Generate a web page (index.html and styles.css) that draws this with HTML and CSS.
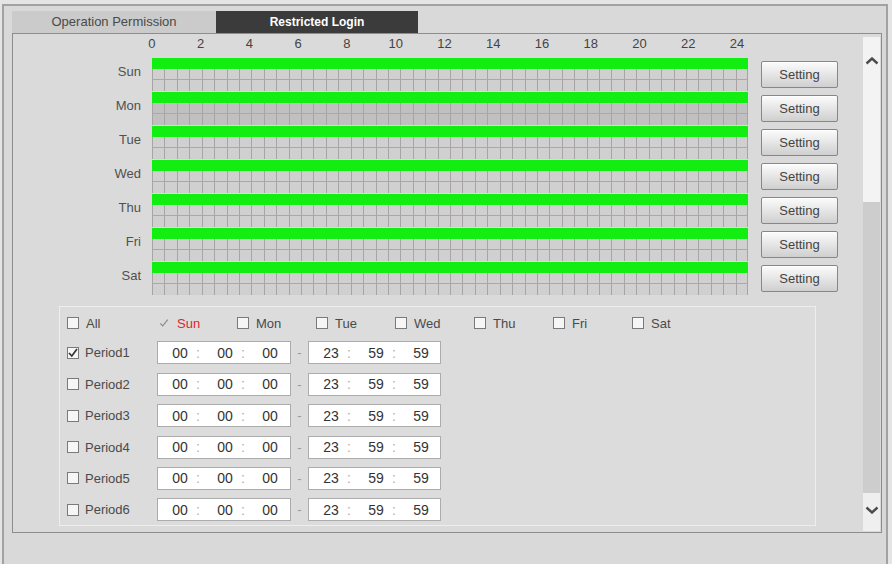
FILE: index.html
```html
<!DOCTYPE html>
<html lang="en">
<head>
  <meta charset="UTF-8">
  <title>Restricted Login</title>
  <meta name="viewport" content="width=device-width, initial-scale=1">
  <link rel="stylesheet" href="styles.css">
</head>
<body>

  <div class="frame">
    <div class="tabs">
      <div class="tab">Operation Permission</div>
      <div class="tab active">Restricted Login</div>
    </div>

    <div class="panel">
      <div class="content">

        <div class="hours">
          <span>0</span><span>2</span><span>4</span><span>6</span><span>8</span><span>10</span><span>12</span>
          <span>14</span><span>16</span><span>18</span><span>20</span><span>22</span><span>24</span>
        </div>

        <div class="day-row">
          <div class="day-name">Sun</div>
          <div class="timeline"><div class="bar"></div><div class="grid"></div></div>
          <button class="setting">Setting</button>
        </div>
        <div class="day-row">
          <div class="day-name">Mon</div>
          <div class="timeline"><div class="bar"></div><div class="grid dark"></div></div>
          <button class="setting">Setting</button>
        </div>
        <div class="day-row">
          <div class="day-name">Tue</div>
          <div class="timeline"><div class="bar"></div><div class="grid"></div></div>
          <button class="setting">Setting</button>
        </div>
        <div class="day-row">
          <div class="day-name">Wed</div>
          <div class="timeline"><div class="bar"></div><div class="grid"></div></div>
          <button class="setting">Setting</button>
        </div>
        <div class="day-row">
          <div class="day-name">Thu</div>
          <div class="timeline"><div class="bar"></div><div class="grid"></div></div>
          <button class="setting">Setting</button>
        </div>
        <div class="day-row">
          <div class="day-name">Fri</div>
          <div class="timeline"><div class="bar"></div><div class="grid"></div></div>
          <button class="setting">Setting</button>
        </div>
        <div class="day-row">
          <div class="day-name">Sat</div>
          <div class="timeline"><div class="bar"></div><div class="grid"></div></div>
          <button class="setting">Setting</button>
        </div>

        <div class="period-box">
          <div class="week-row">
            <label class="check-item first"><span class="checkbox"></span>All</label>
            <label class="check-item current">
              <span class="checkbox plain"><svg width="12" height="12" viewBox="0 0 12 12"><polyline points="1.5,6.5 4.5,9.5 10.5,2" fill="none" stroke="#8c8c8c" stroke-width="1.5"/></svg></span>Sun
            </label>
            <label class="check-item"><span class="checkbox"></span>Mon</label>
            <label class="check-item"><span class="checkbox"></span>Tue</label>
            <label class="check-item"><span class="checkbox"></span>Wed</label>
            <label class="check-item"><span class="checkbox"></span>Thu</label>
            <label class="check-item"><span class="checkbox"></span>Fri</label>
            <label class="check-item"><span class="checkbox"></span>Sat</label>
          </div>

          <div class="period-row">
            <label class="period-name">
              <span class="checkbox"><svg width="10" height="10" viewBox="0 0 10 10"><polyline points="1,5 3.8,8 9,1" fill="none" stroke="#333" stroke-width="1.7"/></svg></span>Period1
            </label>
            <div class="time-box"><span class="num">00</span><span class="sep">:</span><span class="num">00</span><span class="sep">:</span><span class="num">00</span></div>
            <span class="dash">-</span>
            <div class="time-box"><span class="num">23</span><span class="sep">:</span><span class="num">59</span><span class="sep">:</span><span class="num">59</span></div>
          </div>
          <div class="period-row">
            <label class="period-name"><span class="checkbox"></span>Period2</label>
            <div class="time-box"><span class="num">00</span><span class="sep">:</span><span class="num">00</span><span class="sep">:</span><span class="num">00</span></div>
            <span class="dash">-</span>
            <div class="time-box"><span class="num">23</span><span class="sep">:</span><span class="num">59</span><span class="sep">:</span><span class="num">59</span></div>
          </div>
          <div class="period-row">
            <label class="period-name"><span class="checkbox"></span>Period3</label>
            <div class="time-box"><span class="num">00</span><span class="sep">:</span><span class="num">00</span><span class="sep">:</span><span class="num">00</span></div>
            <span class="dash">-</span>
            <div class="time-box"><span class="num">23</span><span class="sep">:</span><span class="num">59</span><span class="sep">:</span><span class="num">59</span></div>
          </div>
          <div class="period-row">
            <label class="period-name"><span class="checkbox"></span>Period4</label>
            <div class="time-box"><span class="num">00</span><span class="sep">:</span><span class="num">00</span><span class="sep">:</span><span class="num">00</span></div>
            <span class="dash">-</span>
            <div class="time-box"><span class="num">23</span><span class="sep">:</span><span class="num">59</span><span class="sep">:</span><span class="num">59</span></div>
          </div>
          <div class="period-row">
            <label class="period-name"><span class="checkbox"></span>Period5</label>
            <div class="time-box"><span class="num">00</span><span class="sep">:</span><span class="num">00</span><span class="sep">:</span><span class="num">00</span></div>
            <span class="dash">-</span>
            <div class="time-box"><span class="num">23</span><span class="sep">:</span><span class="num">59</span><span class="sep">:</span><span class="num">59</span></div>
          </div>
          <div class="period-row">
            <label class="period-name"><span class="checkbox"></span>Period6</label>
            <div class="time-box"><span class="num">00</span><span class="sep">:</span><span class="num">00</span><span class="sep">:</span><span class="num">00</span></div>
            <span class="dash">-</span>
            <div class="time-box"><span class="num">23</span><span class="sep">:</span><span class="num">59</span><span class="sep">:</span><span class="num">59</span></div>
          </div>
        </div>

      </div>

      <div class="scrollbar">
        <div class="sb-up"><svg width="14" height="8" viewBox="0 0 14 8"><polyline points="1.5,6.5 7,1.5 12.5,6.5" fill="none" stroke="#4b4b4b" stroke-width="2.4"/></svg></div>
        <div class="sb-thumb"></div>
        <div class="sb-track"></div>
        <div class="sb-down"><svg width="14" height="8" viewBox="0 0 14 8"><polyline points="1.5,1.5 7,6.5 12.5,1.5" fill="none" stroke="#4b4b4b" stroke-width="2.4"/></svg></div>
      </div>
    </div>
  </div>

</body>
</html>
```

FILE: styles.css
```css
* {
  box-sizing: border-box;
}
body {
  margin: 0;
  background: #e5e5e5;
  font-family: "Liberation Sans", Arial, sans-serif;
  font-size: 13px;
  color: #4a4a4a;
}

/* outer window */
.frame {
  margin: 4px 0 0 2px;
  width: 886px;
  height: 560px;
  border: 2px solid #a2a2a2;
  border-bottom: none;
  background: #d9d9d9;
  padding: 5px 0 0 8px;
}
.tabs {
  display: flex;
  height: 22px;
}
.tab {
  width: 204px;
  line-height: 22px;
  text-align: center;
  background: #cbcbcb;
  color: #4a4a4a;
}
.tab.active {
  width: 202px;
  background: #3b3b3b;
  color: #fff;
  font-weight: bold;
  font-size: 12px;
}

.panel {
  display: flex;
  width: 870px;
  height: 500px;
  border: 1px solid #8d8d8d;
  background: #dadada;
}
.content {
  flex: 1;
}

/* schedule chart */
.hours {
  display: grid;
  grid-template-columns: repeat(13, 48.75px);
  margin-left: 114.6px;
  height: 24px;
  line-height: 20px;
  text-align: center;
  color: #444;
}
.day-row {
  display: flex;
  align-items: flex-start;
  height: 34px;
}
.day-name {
  width: 128px;
  text-align: right;
  line-height: 27px;
  color: #505050;
}
.timeline {
  margin-left: 11px;
  width: 596px;
}
.bar {
  height: 11px;
  background: #12ee12;
}
.grid {
  height: 22px;
  border-right: 1px solid #a8a4a5;
  background-color: #d0d0d0;
  background-image:
    linear-gradient(to bottom, transparent 10px, #aea6a8 10px, #aea6a8 11px, transparent 11px),
    repeating-linear-gradient(to right, #a8a4a5 0, #a8a4a5 1px, transparent 1px, transparent 12.4167px);
}
.grid.dark {
  background-color: #c0c0c0;
}
.setting {
  margin: 3px 0 0 13px;
  width: 77px;
  height: 27px;
  padding: 0;
  font: 13px "Liberation Sans", Arial, sans-serif;
  color: #444;
  background: linear-gradient(#fcfcfc, #cfcfcf);
  border: 1px solid #878787;
  border-radius: 2px;
  box-shadow: inset 0 1px 0 #fff;
}

/* period editor */
.period-box {
  display: flex;
  flex-direction: column;
  gap: 8.4px;
  margin: 10px 0 0 46px;
  width: 757px;
  border: 1px solid #eeeeee;
  background: #dcdcdc;
  padding: 6px 0 4px 7px;
}
.week-row {
  display: flex;
  align-items: center;
  height: 20px;
}
.check-item {
  display: flex;
  align-items: center;
  gap: 7px;
  width: 79px;
}
.check-item.first {
  width: 91px;
}
.check-item.current {
  color: #e2242c;
}
.checkbox {
  display: inline-flex;
  align-items: center;
  justify-content: center;
  width: 12px;
  height: 12px;
  border: 1px solid #7a7a7a;
  background: #f6f6f6;
}
.checkbox.plain {
  border-color: transparent;
  background: transparent;
}
.period-row {
  display: flex;
  align-items: center;
  height: 23px;
}
.period-name {
  display: flex;
  align-items: center;
  gap: 6px;
  width: 90px;
}
.time-box {
  display: flex;
  align-items: center;
  width: 134px;
  height: 23px;
  padding-left: 14px;
  border: 1px solid #acacac;
  background: #fff;
  font-size: 14px;
  color: #333;
}
.time-box + .dash + .time-box {
  width: 133px;
}
.num {
  width: 16px;
  margin-right: 8px;
  text-align: center;
}
.sep {
  width: 4px;
  margin-right: 17px;
  text-align: center;
  color: #b0b0b0;
}
.num:last-child {
  margin-right: 0;
}
.dash {
  width: 17px;
  text-align: center;
  color: #999;
}

/* scroll bar */
.scrollbar {
  display: flex;
  flex-direction: column;
  width: 17px;
  margin: 3px 1px 1px 0;
}
.sb-up {
  display: flex;
  align-items: center;
  justify-content: center;
  height: 48px;
  background: #f3f3f3;
}
.sb-thumb {
  height: 117px;
  background: #f3f3f3;
}
.sb-track {
  flex: 1;
  background: #cdcdcd;
}
.sb-down {
  display: flex;
  justify-content: center;
  height: 38px;
  padding-top: 13px;
  background: #efefef;
}
```
